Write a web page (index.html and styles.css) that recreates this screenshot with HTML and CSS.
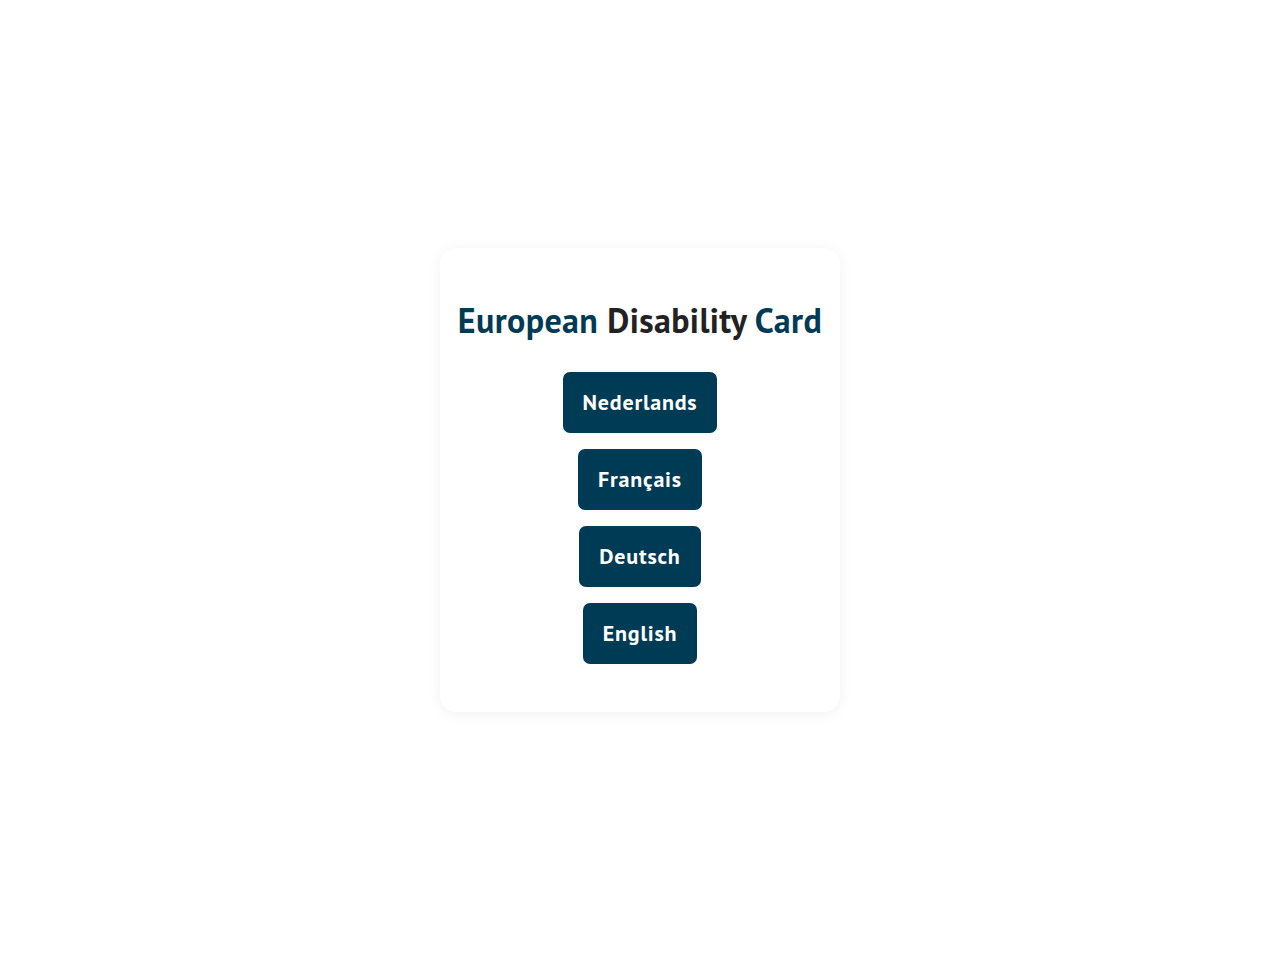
FILE: index.html
```html
<!DOCTYPE html>
<html lang="en">
<head>
<meta charset="utf-8">
<title>European Disability Card</title>
<link rel="stylesheet" href="styles.css">
</head>
<body>
<main class="page">
  <section class="card">
    <h1 class="title"><span class="accent">European</span> Disability <span class="accent">Card</span></h1>
    <nav class="langs">
      <a class="lang-btn" href="#">Nederlands</a>
      <a class="lang-btn" href="#">Français</a>
      <a class="lang-btn" href="#">Deutsch</a>
      <a class="lang-btn" href="#">English</a>
    </nav>
  </section>
</main>
</body>
</html>
```
FILE: styles.css
```css
html, body {
  margin: 0;
  padding: 0;
  background: #ffffff;
}
body {
  font-family: "PT Sans", "Lato", "Noto Sans", sans-serif;
}
.page {
  min-height: 100vh;
  display: flex;
  align-items: center;
  justify-content: center;
}
.card {
  width: 400px;
  box-sizing: border-box;
  padding: 48px 16px;
  background: #ffffff;
  border-radius: 16px;
  box-shadow: 0 2px 14px rgba(0, 0, 0, 0.06);
  display: flex;
  flex-direction: column;
  align-items: center;
}
.title {
  margin: 0 0 28px;
  font-size: 34px;
  line-height: 48px;
  font-weight: 700;
  color: #222222;
  white-space: nowrap;
  letter-spacing: 0.4px;
}
.accent {
  color: #003b55;
}
.langs {
  display: flex;
  flex-direction: column;
  align-items: center;
  gap: 16px;
}
.lang-btn {
  display: flex;
  align-items: center;
  justify-content: center;
  height: 61px;
  padding: 0 20px 2px;
  box-sizing: border-box;
  background: #003b55;
  color: #ffffff;
  border-radius: 7px;
  font-size: 22px;
  font-weight: 700;
  text-decoration: none;
  letter-spacing: 0.8px;
}
```
